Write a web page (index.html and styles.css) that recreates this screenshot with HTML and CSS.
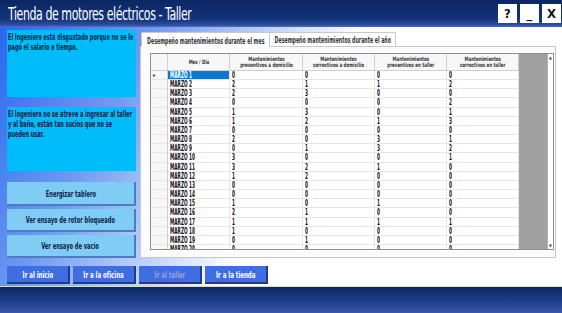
FILE: index.html
```html
<!DOCTYPE html>
<html lang="es">
<head>
    <meta charset="UTF-8">
    <meta name="viewport" content="width=device-width, initial-scale=1.0">
    <title>Tienda de motores eléctricos - Taller</title>
    <link rel="stylesheet" href="styles.css">
</head>
<body>
    <div class="window">
        <header class="titlebar">
            <h1>Tienda de motores eléctricos - Taller</h1>
            <div class="win-controls">
                <button class="win-btn">?</button>
                <button class="win-btn">_</button>
                <button class="win-btn">X</button>
            </div>
        </header>

        <main class="workspace">
            <aside class="side">
                <div class="note">
                    <p>El Ingeniero está disgustado porque no se le pagó el salario a tiempo.</p>
                </div>
                <div class="note note-second">
                    <p>El Ingeniero no se atreve a ingresar al taller y al baño, están tan sucios que no se pueden usar.</p>
                </div>
                <div class="actions">
                    <button class="action"><span>Energizar tablero</span></button>
                    <button class="action"><span>Ver ensayo de rotor bloqueado</span></button>
                    <button class="action"><span>Ver ensayo de vacío</span></button>
                </div>
            </aside>

            <section class="tabs">
                <div class="tab-strip">
                    <span class="tab active"><span>Desempeño mantenimientos durante el mes</span></span>
                    <span class="tab"><span>Desempeño mantenimientos durante el año</span></span>
                </div>
                <div class="tab-page">
                    <div class="grid">
                        <div class="grid-body">
                            <table class="data">
                                <colgroup>
                                    <col class="c-row">
                                    <col class="c-day">
                                    <col class="c-wide">
                                    <col class="c-num">
                                    <col class="c-num">
                                    <col class="c-num">
                                </colgroup>
                                <thead>
                                    <tr>
                                        <th class="rowhead"></th>
                                        <th><span>Mes / Día</span></th>
                                        <th><span>Mantenimientos<br>preventivos a domicilio</span></th>
                                        <th><span>Mantenimientos<br>correctivos a domicilio</span></th>
                                        <th><span>Mantenimientos<br>preventivos en taller</span></th>
                                        <th><span>Mantenimientos<br>correctivos en taller</span></th>
                                    </tr>
                                </thead>
                                <tbody id="rows"></tbody>
                            </table>
                        </div>
                        <div class="vscroll">
                            <span class="arrow">&#9650;</span>
                            <span class="arrow">&#9660;</span>
                        </div>
                    </div>
                </div>
            </section>

            <nav class="nav">
                <button class="nav-btn"><span>Ir al inicio</span></button>
                <button class="nav-btn"><span>Ir a la oficina</span></button>
                <button class="nav-btn disabled"><span>Ir al taller</span></button>
                <button class="nav-btn"><span>Ir a la tienda</span></button>
            </nav>
        </main>

        <footer class="bottom-band"></footer>
    </div>

    <script>
        // Datos de marzo: preventivos dom., correctivos dom., preventivos taller, correctivos taller
        const datos = [
            [0, 0, 0, 0], [2, 1, 1, 2], [2, 3, 0, 0], [0, 0, 0, 2], [1, 3, 0, 1],
            [1, 2, 1, 3], [0, 0, 0, 0], [2, 0, 3, 1], [0, 1, 3, 2], [3, 0, 0, 1],
            [3, 2, 1, 0], [1, 2, 0, 0], [0, 0, 0, 0], [0, 0, 0, 0], [1, 0, 1, 0],
            [2, 1, 0, 0], [1, 1, 1, 1], [1, 0, 0, 0], [0, 1, 0, 0], [0, 0, 0, 0],
            [1, 0, 0, 1]
        ];

        const tbody = document.getElementById('rows');

        datos.forEach(function(fila, i) {
            const tr = document.createElement('tr');
            let html = '<td class="rowhead">' + (i === 0 ? '&#9656;' : '') + '</td>';
            html += '<td class="' + (i === 0 ? 'selected' : '') + '"><span>MARZO ' + (i + 1) + '</span></td>';
            fila.forEach(function(valor) {
                html += '<td><span>' + valor + '</span></td>';
            });
            tr.innerHTML = html;
            tbody.appendChild(tr);
        });
    </script>
</body>
</html>
```

FILE: styles.css
```css
* {
    margin: 0;
    padding: 0;
    box-sizing: border-box;
}

body {
    font-family: "DejaVu Sans Condensed", "Liberation Sans Narrow", "DejaVu Sans", sans-serif;
    font-stretch: condensed;
    width: 562px;
    height: 313px;
    overflow: hidden;
    background: #fff;
}

.window {
    display: flex;
    flex-direction: column;
    height: 313px;
}

/* Barra de título */
.titlebar {
    height: 27px;
    flex-shrink: 0;
    display: flex;
    align-items: center;
    justify-content: space-between;
    padding: 0 1px 0 8px;
    background: linear-gradient(to bottom, #0b2763 0%, #14337a 70%, #2c4d9e 92%, #4d6fc0 100%);
}

.titlebar h1 {
    color: #fff;
    font-size: 17px;
    font-weight: normal;
    letter-spacing: -0.6px;
    transform: scaleX(0.72);
    transform-origin: left center;
    white-space: nowrap;
}

.win-controls {
    display: flex;
    gap: 3px;
}

.win-btn {
    width: 19px;
    height: 19px;
    border: none;
    background: #fff;
    color: #111;
    font-family: inherit;
    font-weight: bold;
    font-size: 13px;
    line-height: 19px;
}

/* Zona de trabajo */
.workspace {
    height: 260px;
    flex-shrink: 0;
    display: grid;
    grid-template-columns: 129px 1fr;
    grid-template-rows: 228px 18px;
    column-gap: 4px;
    row-gap: 8px;
    padding: 3px 6px 0 7px;
    background: linear-gradient(118deg, #2a67ee 0%, #6f9af2 22%, #c4d7fa 40%, #fff 52%);
    border-bottom: 1px solid #d8d8d8;
}

.side {
    display: flex;
    flex-direction: column;
}

.note {
    height: 67px;
    background: #00bcfa;
    padding: 2px 1px;
}

.note-second {
    height: 64px;
    margin-top: 10px;
}

.note p {
    width: 194px;
    font-size: 8.5px;
    line-height: 10px;
    font-weight: bold;
    color: #0c2146;
    transform: scaleX(0.65);
    transform-origin: left top;
}

.actions {
    display: flex;
    flex-direction: column;
    gap: 3px;
    margin-top: 11px;
}

.action {
    height: 23px;
    background: #7fcdf4;
    border: none;
    border-right: 2px solid #4b7dc0;
    border-bottom: 2px solid #4b7dc0;
    color: #0c2146;
    font-family: inherit;
    font-weight: bold;
    font-size: 9.5px;
    overflow: hidden;
    white-space: nowrap;
}

.action:first-child {
    height: 24px;
}

/* Texto estrecho: se comprime en horizontal y se recorta el ancho de caja */
.action span,
.nav-btn span,
.tab span,
.data th span {
    display: inline-block;
    margin: 0 -60px;
    transform: scaleX(0.6);
}

.nav-btn span {
    transform: scaleX(0.64);
}

.tab span {
    transform: scaleX(0.55);
}

.data th span {
    transform: scaleX(0.74);
}

/* Pestañas */
.tabs {
    display: flex;
    flex-direction: column;
}

.tab-strip {
    height: 16px;
    display: flex;
    align-items: flex-end;
    padding-left: 1px;
}

.tab {
    height: 14px;
    display: flex;
    align-items: center;
    justify-content: center;
    background: #fff;
    border: 1px solid #c8c8c8;
    border-bottom: none;
    font-size: 9.5px;
    font-weight: bold;
    color: #333;
    white-space: nowrap;
}

.tab.active {
    width: 129px;
    height: 15px;
    margin-bottom: -1px;
    position: relative;
}

.tab:not(.active) {
    width: 126px;
    border-left: none;
}

.tab-page {
    flex: 1;
    background: #fbfbfb;
    border: 1px solid #c8c8c8;
    padding: 6px 1px 7px 9px;
}

/* Tabla de datos */
.grid {
    height: 197px;
    display: flex;
    border: 1px solid #8f8f8f;
    background: #a0a0a0;
    overflow: hidden;
}

.grid-body {
    width: 396px;
    overflow: hidden;
}

.data {
    width: 368px;
    table-layout: fixed;
    border-collapse: separate;
    border-spacing: 0;
    background: #fff;
    font-size: 8.5px;
    color: #111;
}

.c-row { width: 17px; }
.c-day { width: 62px; }
.c-wide { width: 73px; }
.c-num { width: 72px; }

.data th {
    height: 17px;
    font-size: 6px;
    line-height: 6.5px;
    font-weight: bold;
    color: #333;
    background: #f7f7f7;
    border-right: 1px solid #cfcfcf;
    border-bottom: 1px solid #cfcfcf;
    text-align: center;
    white-space: nowrap;
    vertical-align: middle;
}

.data td {
    line-height: 8.15px;
    padding: 0 2px;
    border-right: 1px solid #e6e6e6;
    border-bottom: 1px solid #e6e6e6;
    font-weight: bold;
    white-space: nowrap;
    overflow: hidden;
}

.data td span {
    display: inline-block;
    margin-right: -40px;
    transform: scaleX(0.56);
    transform-origin: left center;
}

.data .rowhead {
    background: #f7f7f7;
    border-right: 1px solid #cfcfcf;
    font-size: 6px;
    color: #444;
    padding: 0 2px;
}

.data td.selected {
    background: #0a78d7;
    color: #fff;
}

.vscroll {
    width: 6px;
    background: #fff;
    border-left: 1px solid #b0b0b0;
    display: flex;
    flex-direction: column;
    justify-content: space-between;
    align-items: center;
    font-size: 4px;
    color: #333;
    padding: 1px 0;
}

/* Navegación inferior */
.nav {
    grid-column: 1 / -1;
    display: flex;
    gap: 3px;
}

.nav-btn {
    width: 63px;
    height: 18px;
    background: #3f6ee2;
    border: none;
    border-right: 2px solid #1f3c8c;
    border-bottom: 2px solid #1f3c8c;
    color: #fff;
    font-family: inherit;
    font-weight: bold;
    font-size: 9.5px;
    white-space: nowrap;
    overflow: hidden;
}

.nav-btn.disabled {
    color: #9aa6c8;
}

.bottom-band {
    flex: 1;
    background: linear-gradient(to bottom, #0a2865 0%, #1d3a86 50%, #3b56ad 100%);
}
```
